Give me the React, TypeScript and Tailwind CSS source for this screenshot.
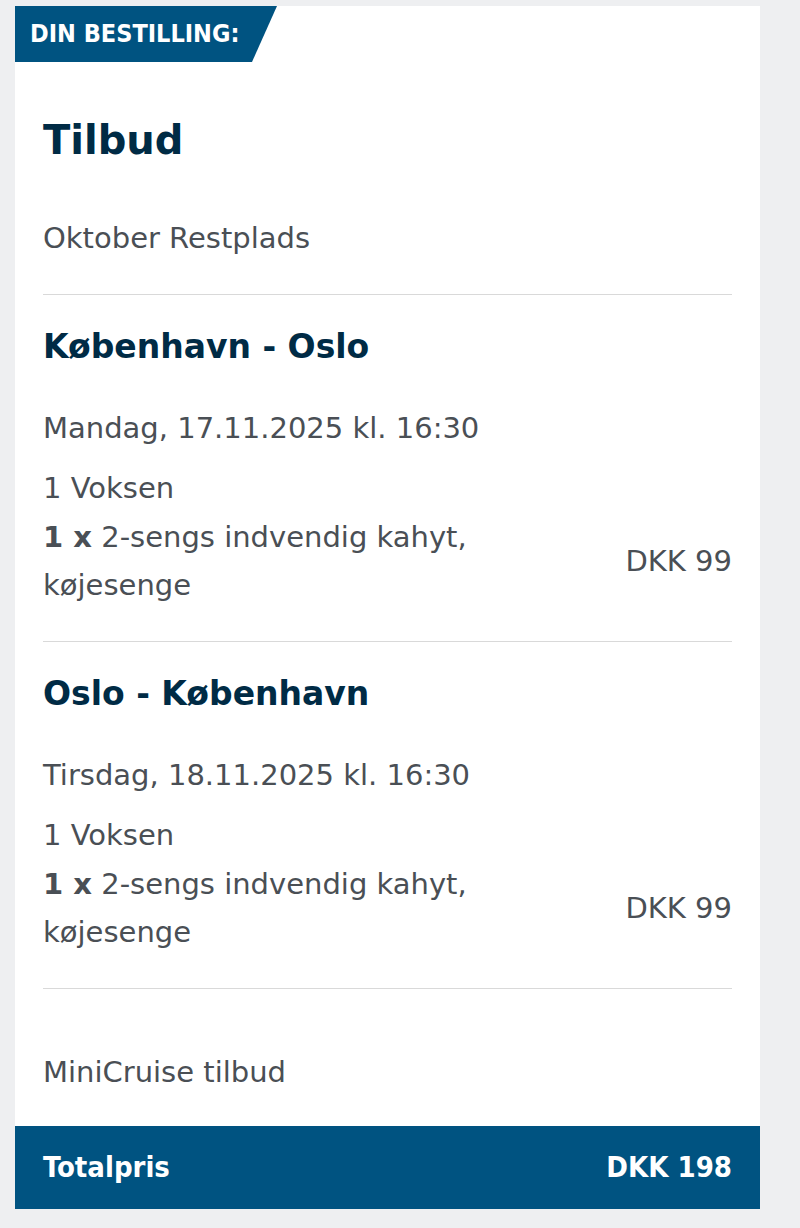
import React from "react";

const body = "[font-family:'DejaVu_Sans',sans-serif]";

function Leg({ title, date }: { title: string; date: string }) {
  return (
    <div className="pt-[30px] pb-[32px] border-b border-[#d9d9d9]">
      <div className="text-[33px] leading-[44px] font-bold text-[#002b45]">{title}</div>
      <div className="mt-[35px] text-[29px] leading-[48px] text-[#4a4f55]">{date}</div>
      <div className="mt-[12px] text-[29px] leading-[48px] text-[#4a4f55]">1 Voksen</div>
      <div className="mt-[1px] flex items-center justify-between text-[29px] leading-[48px] text-[#4a4f55]">
        <div>
          <span className="font-bold">1 x</span> 2-sengs indvendig kahyt,
          <br />
          køjesenge
        </div>
        <div>DKK 99</div>
      </div>
    </div>
  );
}

export default function App() {
  return (
    <div className={`min-h-[1228px] bg-[#eeeff1] pt-[6px] pl-[15px] ${body}`}>
      <div className="w-[745px] bg-white">
        <div className="h-[56px] w-[262px] bg-[#005381] pl-[15px] flex items-center [clip-path:polygon(0_0,100%_0,calc(100%-25px)_100%,0_100%)]">
          <span className="text-white font-bold text-[25px] [font-family:'DejaVu_Sans_Condensed','DejaVu_Sans',sans-serif]">
            DIN BESTILLING:
          </span>
        </div>
        <div className="px-[28px]">
          <div className="pt-[54px] pb-[32px] border-b border-[#d9d9d9]">
            <div className="text-[40px] leading-[48px] font-bold text-[#002b45]">Tilbud</div>
            <div className="mt-[50px] text-[29px] leading-[48px] text-[#4a4f55]">Oktober Restplads</div>
          </div>
          <Leg title="København - Oslo" date="Mandag, 17.11.2025 kl. 16:30" />
          <Leg title="Oslo - København" date="Tirsdag, 18.11.2025 kl. 16:30" />
          <div className="pt-[59px] pb-[30px] text-[29px] leading-[48px] text-[#4a4f55]">MiniCruise tilbud</div>
        </div>
        <div className="h-[83px] bg-[#005381] px-[28px] flex items-center justify-between text-white font-bold text-[29px] [font-family:'DejaVu_Sans_Condensed','DejaVu_Sans',sans-serif]">
          <span>Totalpris</span>
          <span>DKK 198</span>
        </div>
      </div>
    </div>
  );
}
